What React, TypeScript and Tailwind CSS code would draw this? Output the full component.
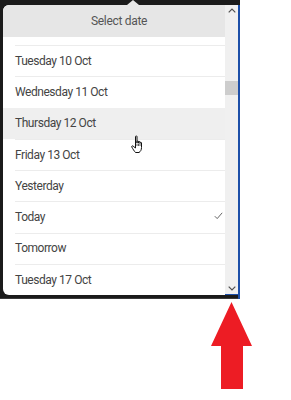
import React from 'react';

const rows = [
  { label: 'Tuesday 10 Oct' },
  { label: 'Wednesday 11 Oct' },
  { label: 'Thursday 12 Oct', hover: true },
  { label: 'Friday 13 Oct' },
  { label: 'Yesterday' },
  { label: 'Today', checked: true },
  { label: 'Tomorrow' },
  { label: 'Tuesday 17 Oct' },
];

const font = { fontFamily: 'Roboto, "Liberation Sans", sans-serif' };

const App = () => {
  return (
    <div className="w-[291px] h-[400px] bg-white overflow-hidden" style={font}>
      {/* dark page behind the picker */}
      <div className="relative w-[240px] h-[299px] bg-[#1b1b1b] pt-[5px] pl-[3px] border-b border-[#3a3a3a]">
        {/* notch */}
        <div className="absolute left-[127px] top-0 w-0 h-0 border-l-[6px] border-r-[6px] border-b-[5px] border-l-transparent border-r-transparent border-b-[#e6e6e6]" />

        <div className="flex h-[290px]">
          {/* popup */}
          <div className="w-[222px] h-full bg-white rounded-l-[6px] overflow-hidden flex flex-col">
            <div className="h-[32px] shrink-0 bg-[#e6e6e6] flex items-center justify-center pl-[10px] text-[12px] tracking-[-0.3px] text-[#555]">
              Select date
            </div>
            <div className="h-[8px] shrink-0" />
            {rows.map((row) => (
              <div
                key={row.label}
                className={`relative h-[31.3px] shrink-0 flex items-center pl-[12px] text-[12px] tracking-[-0.45px] text-[#444] ${row.hover ? 'bg-[#efefef]' : ''}`}
              >
                <div className={`absolute top-0 left-[12px] right-0 h-px ${row.hover ? 'bg-[#efefef]' : 'bg-[#ececec]'}`} />
                <span>{row.label}</span>
                {row.checked && (
                  <svg className="absolute right-[2px] top-[11px]" width="9" height="8" viewBox="0 0 9 8">
                    <path d="M0.8 4.2 L3.2 6.6 L8.2 0.8" fill="none" stroke="#666" strokeWidth="1" />
                  </svg>
                )}
              </div>
            ))}
          </div>

          {/* scrollbar */}
          <div className="relative w-[13px] h-full bg-[#f0f0f0] flex flex-col items-center border-b border-[#1d4fa8]">
            <svg className="mt-[3px]" width="8" height="5" viewBox="0 0 8 5">
              <path d="M0.7 4.3 L4 1 L7.3 4.3" fill="none" stroke="#505050" strokeWidth="1.2" />
            </svg>
            <div className="mt-[68px] w-full h-[14px] bg-[#cdcdcd]" />
            <div className="flex-1" />
            <svg className="mb-[3px]" width="8" height="5" viewBox="0 0 8 5">
              <path d="M0.7 0.7 L4 4 L7.3 0.7" fill="none" stroke="#505050" strokeWidth="1.2" />
            </svg>
          </div>

          {/* blue edge */}
          <div className="w-[2px] h-[294px] bg-[#1d4fa8]" />
        </div>

        {/* mouse cursor */}
        <svg className="absolute left-[131px] top-[135px]" width="16" height="20" viewBox="0 0 16 20">
          <path
            d="M4.5 1.5 C4.5 0.8 6 0.8 6 1.5 L6 8 L6 6.5 C6 5.8 7.5 5.8 7.5 6.5 L7.5 8 L7.5 7 C7.5 6.3 9 6.3 9 7 L9 8.5 L9 7.8 C9 7.1 10.5 7.1 10.5 7.8 L10.5 12.5 C10.5 15 9.5 16.5 8 17.5 L4.5 17.5 C3.5 16.5 1.5 13.5 0.8 12 C0.4 11 1.4 10.4 2.2 11.2 L4.5 13 Z"
            fill="#fff"
            stroke="#111"
            strokeWidth="1"
            strokeLinejoin="round"
          />
          <path d="M6 8.5 L6 11 M7.5 8.5 L7.5 11 M9 9 L9 11" stroke="#111" strokeWidth="0.7" />
        </svg>
      </div>

      {/* red arrow pointing up at the scrollbar */}
      <div className="ml-[211px] mt-[3px]">
        <svg width="42" height="88" viewBox="0 0 42 88">
          <polygon points="20.5,0 41,44 32,44 32,87 10,87 10,44 0,44" fill="#ed1c24" />
        </svg>
      </div>
    </div>
  );
};

export default App;
